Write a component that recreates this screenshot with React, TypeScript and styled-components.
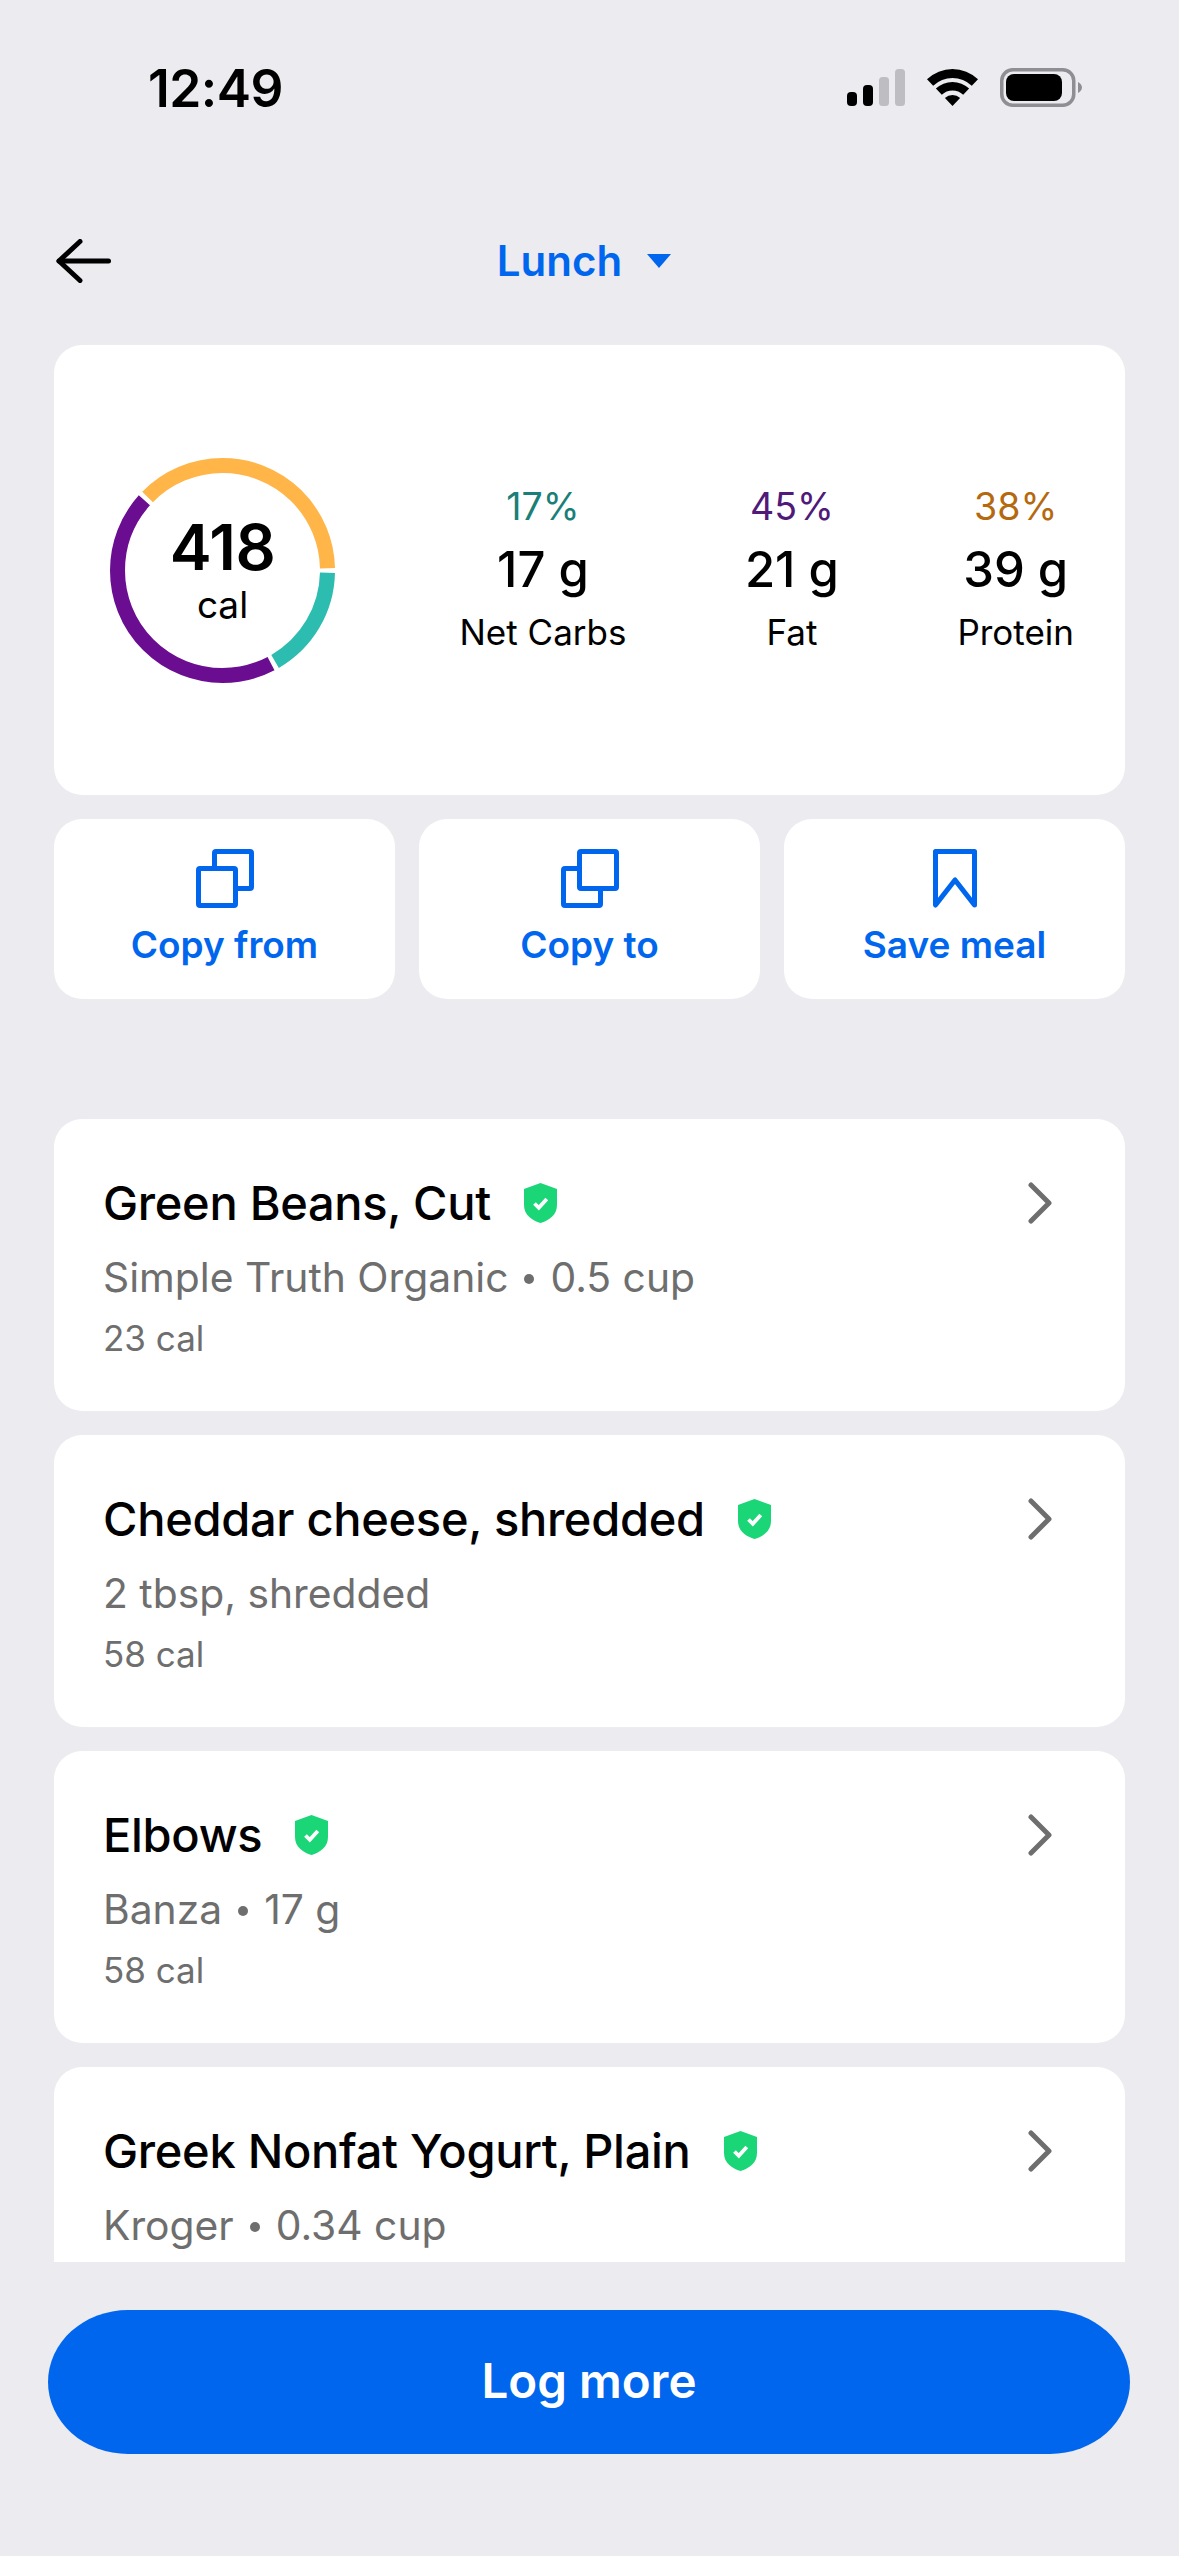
import React from 'react';
import styled, { createGlobalStyle } from 'styled-components';

const BLUE = '#0066EE';

const GlobalStyle = createGlobalStyle`
  html, body {
    margin: 0;
    padding: 0;
    background: #ebebf0;
  }
  * {
    box-sizing: border-box;
  }
`;

const macros = [
  { pct: '17%', grams: '17 g', label: 'Net Carbs', pctColor: '#1a7f78' },
  { pct: '45%', grams: '21 g', label: 'Fat', pctColor: '#4f1a78' },
  { pct: '38%', grams: '39 g', label: 'Protein', pctColor: '#b5690f' },
];

const ringSegments = [
  { color: '#2dbdb0', start: 0, size: 17 },
  { color: '#6a0d91', start: 17, size: 45 },
  { color: '#ffb547', start: 62, size: 38 },
];

const foods = [
  { name: 'Green Beans, Cut', detail: ['Simple Truth Organic', '0.5 cup'], cal: '23 cal' },
  { name: 'Cheddar cheese, shredded', detail: ['2 tbsp, shredded'], cal: '58 cal' },
  { name: 'Elbows', detail: ['Banza', '17 g'], cal: '58 cal' },
  { name: 'Greek Nonfat Yogurt, Plain', detail: ['Kroger', '0.34 cup'] },
];

function StatusIcons() {
  return (
    <StatusGroup>
      <svg width="58" height="37" viewBox="0 0 58 37">
        <rect x="0" y="23" width="10" height="14" rx="4" fill="#000" />
        <rect x="16" y="16" width="10" height="21" rx="4" fill="#000" />
        <rect x="32" y="8" width="10" height="29" rx="3.500" fill="#bebec2" />
        <rect x="48" y="0" width="10" height="37" rx="3.500" fill="#bebec2" />
      </svg>
      <svg width="51" height="37" viewBox="0 0 51 37" fill="#000">
        <path d="M0 10.200A37 37 0 0 1 51 10.200L44.800 16.700A28 28 0 0 0 6.200 16.700Z" />
        <path d="M8.900 19.600A24 24 0 0 1 42.100 19.600L36.200 25.800A15.500 15.500 0 0 0 14.800 25.800Z" />
        <path d="M17.900 29A11 11 0 0 1 33.100 29L25.500 37Z" />
      </svg>
      <svg width="82" height="39" viewBox="0 0 82 39">
        <rect x="1.750" y="1.750" width="72" height="35.500" rx="11" fill="none" stroke="#8e8e93" strokeWidth="3.500" />
        <rect x="6" y="6" width="56" height="27" rx="8" fill="#000" />
        <path d="M78 14C80 15 82 17 82 19.500C82 22 80 24 78 25Z" fill="#8e8e93" />
      </svg>
    </StatusGroup>
  );
}

function BackArrow() {
  return (
    <svg width="58" height="44" viewBox="0 0 58 44" fill="none" stroke="#000" strokeWidth="5" strokeLinecap="round" strokeLinejoin="round">
      <path d="M5 22H54.500" />
      <path d="M26 2.500L5 22L26 41.500" />
    </svg>
  );
}

function CopyIcon({ front }: { front: 'top' | 'bottom' }) {
  const top = <rect x="18.500" y="2.500" width="37" height="37" rx="1.500" />;
  const bottom = <rect x="2.500" y="19.500" width="37" height="37" rx="1.500" />;
  return (
    <svg width="58" height="59" viewBox="0 0 58 59" fill="#fff" stroke={BLUE} strokeWidth="5">
      {front === 'top' ? bottom : top}
      {front === 'top' ? top : bottom}
    </svg>
  );
}

function BookmarkIcon() {
  return (
    <svg width="44" height="59" viewBox="0 0 44 59" fill="none" stroke={BLUE} strokeWidth="5" strokeLinejoin="round">
      <path d="M2.500 2.500H41.500V56L22 31L2.500 56Z" />
    </svg>
  );
}

function ShieldIcon() {
  return (
    <svg width="33" height="40" viewBox="0 0 33 40">
      <path d="M16.500 0L33 6V22C33 32 25 37.500 16.500 40C8 37.500 0 32 0 22V6Z" fill="#1ad677" />
      <path d="M10.500 20.500L14.800 24.800L22.800 16" fill="none" stroke="#fff" strokeWidth="3.800" />
    </svg>
  );
}

function Chevron() {
  return (
    <svg width="24" height="42" viewBox="0 0 24 42" fill="none" stroke="#6e6e6e" strokeWidth="5" strokeLinecap="round" strokeLinejoin="round">
      <path d="M3 3L21 21L3 39" />
    </svg>
  );
}

function CalorieRing() {
  return (
    <RingBox>
      <svg width="225" height="225" viewBox="0 0 225 225">
        {ringSegments.map((s) => (
          <circle
            key={s.color}
            cx="112.500"
            cy="112.500"
            r="105"
            fill="none"
            stroke={s.color}
            strokeWidth="15"
            pathLength={100}
            strokeDasharray={`${s.size - 0.7} ${100 - s.size + 0.7}`}
            strokeDashoffset={-(s.start + 0.35)}
          />
        ))}
      </svg>
      <RingLabel>
        <RingValue>418</RingValue>
        <RingUnit>cal</RingUnit>
      </RingLabel>
    </RingBox>
  );
}

export default function App() {
  return (
    <Page>
      <GlobalStyle />
      <StatusBar>
        <Clock>12:49</Clock>
        <StatusIcons />
      </StatusBar>

      <Header>
        <BackButton>
          <BackArrow />
        </BackButton>
        <MealPicker>
          Lunch
          <Caret />
        </MealPicker>
      </Header>

      <SummaryCard>
        <CalorieRing />
        <MacroList>
          {macros.map((m) => (
            <Macro key={m.label}>
              <MacroPct $color={m.pctColor}>{m.pct}</MacroPct>
              <MacroGrams>{m.grams}</MacroGrams>
              <MacroLabel>{m.label}</MacroLabel>
            </Macro>
          ))}
        </MacroList>
      </SummaryCard>

      <ActionRow>
        <ActionButton>
          <CopyIcon front="bottom" />
          Copy from
        </ActionButton>
        <ActionButton>
          <CopyIcon front="top" />
          Copy to
        </ActionButton>
        <ActionButton>
          <BookmarkIcon />
          Save meal
        </ActionButton>
      </ActionRow>

      <FoodList>
        {foods.map((f) => (
          <FoodRow key={f.name}>
            <FoodInfo>
              <FoodTitle>
                {f.name}
                <ShieldIcon />
              </FoodTitle>
              <FoodDetail>
                {f.detail[0]}
                {f.detail[1] && (
                  <>
                    <Dot />
                    {f.detail[1]}
                  </>
                )}
              </FoodDetail>
              {f.cal && <FoodCal>{f.cal}</FoodCal>}
            </FoodInfo>
            <ChevronSlot>
              <Chevron />
            </ChevronSlot>
          </FoodRow>
        ))}
      </FoodList>

      <Footer>
        <LogButton>Log more</LogButton>
      </Footer>
    </Page>
  );
}

const Page = styled.div`
  width: 1179px;
  height: 2556px;
  overflow: hidden;
  background: #ebebf0;
  color: #000;
  font-family: Inter, 'Liberation Sans', sans-serif;
`;

const StatusBar = styled.div`
  height: 211px;
  padding: 60px 97px 0 148px;
  display: flex;
  justify-content: space-between;
  align-items: flex-start;
`;

const Clock = styled.div`
  font-size: 51.5px;
  line-height: 56px;
  font-weight: 600;
  letter-spacing: -0.5px;
`;

const StatusGroup = styled.div`
  display: flex;
  align-items: center;
  gap: 22px;
  margin-top: 8px;
`;

const Header = styled.div`
  height: 100px;
  margin-bottom: 34px;
  padding: 0 54px;
  display: grid;
  grid-template-columns: 1fr auto 1fr;
  align-items: center;
`;

const BackButton = styled.div`
  display: flex;
  align-items: center;
`;

const MealPicker = styled.div`
  display: flex;
  align-items: center;
  gap: 25px;
  margin-right: 11px;
  color: ${BLUE};
  font-size: 42px;
  line-height: 50px;
  font-weight: 600;
`;

const Caret = styled.span`
  width: 0;
  height: 0;
  border-left: 12px solid transparent;
  border-right: 12px solid transparent;
  border-top: 14px solid ${BLUE};
`;

const SummaryCard = styled.div`
  height: 450px;
  margin: 0 54px;
  padding: 0 51px 0 56px;
  background: #fff;
  border-radius: 28px;
  display: flex;
  align-items: center;
  justify-content: space-between;
`;

const RingBox = styled.div`
  position: relative;
  width: 225px;
  height: 225px;
  svg {
    display: block;
  }
`;

const RingLabel = styled.div`
  position: absolute;
  inset: 0;
  padding-top: 2px;
  display: flex;
  flex-direction: column;
  align-items: center;
  justify-content: center;
`;

const RingValue = styled.div`
  font-size: 63px;
  line-height: 64px;
  font-weight: 600;
  letter-spacing: -0.5px;
`;

const RingUnit = styled.div`
  margin-top: 4px;
  font-size: 37px;
  line-height: 44px;
`;

const MacroList = styled.div`
  display: flex;
  gap: 118.5px;
`;

const Macro = styled.div`
  display: flex;
  flex-direction: column;
  align-items: center;
`;

const MacroPct = styled.div<{ $color: string }>`
  color: ${({ $color }) => $color};
  font-size: 37.5px;
  line-height: 40px;
`;

const MacroGrams = styled.div`
  margin-top: 15px;
  font-size: 49px;
  line-height: 56px;
  font-weight: 450;
`;

const MacroLabel = styled.div`
  margin-top: 12px;
  font-size: 35px;
  line-height: 44px;
`;

const ActionRow = styled.div`
  margin: 24px 54px 0;
  display: grid;
  grid-template-columns: repeat(3, 1fr);
  gap: 24px;
`;

const ActionButton = styled.div`
  height: 180px;
  padding-top: 30px;
  background: #fff;
  border-radius: 28px;
  display: flex;
  flex-direction: column;
  align-items: center;
  gap: 15px;
  color: ${BLUE};
  font-size: 37px;
  line-height: 44px;
  font-weight: 600;
`;

const FoodList = styled.div`
  height: 1143px;
  margin: 120px 54px 0;
  overflow: hidden;
  display: flex;
  flex-direction: column;
  gap: 24px;
`;

const FoodRow = styled.div`
  flex: none;
  height: 292px;
  padding: 56px 73px 0 49px;
  background: #fff;
  border-radius: 28px;
  display: flex;
  justify-content: space-between;
  align-items: flex-start;
`;

const FoodInfo = styled.div`
  display: flex;
  flex-direction: column;
`;

const FoodTitle = styled.div`
  display: flex;
  align-items: center;
  gap: 33px;
  font-size: 47px;
  line-height: 56px;
  font-weight: 500;
  letter-spacing: -0.3px;
`;

const FoodDetail = styled.div`
  display: flex;
  align-items: center;
  margin-top: 20px;
  color: #6e6e6e;
  font-size: 40.8px;
  line-height: 52px;
`;

const Dot = styled.span`
  width: 10px;
  height: 10px;
  margin: 3px 16px 0;
  border-radius: 50%;
  background: #6e6e6e;
`;

const FoodCal = styled.div`
  margin-top: 13px;
  color: #6e6e6e;
  font-size: 35px;
  line-height: 44px;
`;

const ChevronSlot = styled.div`
  margin-top: 7px;
  display: flex;
`;

const Footer = styled.div`
  margin-top: 48px;
  padding: 0 49px 0 48px;
`;

const LogButton = styled.button`
  width: 100%;
  height: 144px;
  padding: 0 0 3px;
  border: 0;
  border-radius: 80px / 72px;
  background: ${BLUE};
  color: #fff;
  font-family: Inter, 'Liberation Sans', sans-serif;
  font-size: 47.5px;
  font-weight: 600;
`;
